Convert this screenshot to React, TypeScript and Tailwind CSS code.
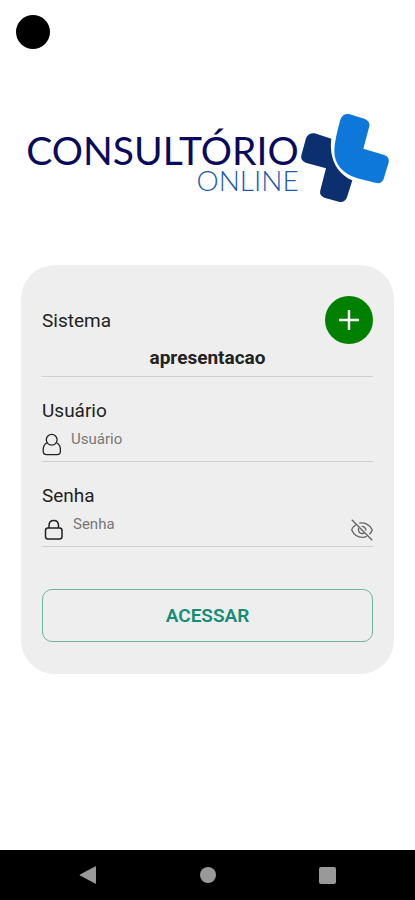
import { useState } from "react";

function LogoMark() {
  return (
    <svg viewBox="0 0 270 270" className="h-[90px] w-[90px] shrink-0" aria-hidden="true">
      <path
        fill="#0b2f6f"
        d="M47 61 L97 77 C90 130 110 180 160 202 L144 253 Q138 269 122 267 L76 254 Q60 248 64 232 L81 166 L20 149 Q4 143 7 127 L21 76 Q28 59 47 61 Z"
      />
      <path
        fill="#0e78da"
        d="M150 3 L196 17 Q214 24 211 40 L193 107 L256 126 Q272 132 269 148 L254 198 Q248 213 232 210 L175 196 Q105 172 106 112 Q107 80 124 20 Q130 1 150 3 Z"
      />
    </svg>
  );
}

function UserIcon() {
  return (
    <svg viewBox="0 0 20 24" className="mt-0.5 h-6 w-5 shrink-0" fill="none" stroke="#222" strokeWidth="1.3" aria-hidden="true">
      <circle cx="9.7" cy="6.8" r="5.4" />
      <path d="M5 9.8 C2.4 11.2 1.2 13.5 1.2 16.5 V18.2 Q1.2 21.6 4.6 21.6 H15 Q18.4 21.6 18.4 18.2 V16.5 C18.4 13.5 17.2 11.2 14.6 9.8" />
    </svg>
  );
}

function LockIcon() {
  return (
    <svg viewBox="0 0 20 24" className="mt-0.5 h-6 w-5 shrink-0" fill="none" stroke="#222" strokeWidth="1.5" aria-hidden="true">
      <rect x="1.5" y="10" width="16.5" height="11" rx="2.5" />
      <path d="M5 10 V7.5 Q5 2.5 9.8 2.5 Q14.5 2.5 14.5 7.5 V10" />
    </svg>
  );
}

function EyeOffIcon() {
  return (
    <svg viewBox="0 0 24 24" className="size-[22px]" fill="none" stroke="#666" strokeWidth="1.5" aria-hidden="true">
      <path d="M5.2 6.3 C3.2 7.7 1.2 10 0.8 12 C3 17 7.8 20 12.5 20 C14.3 20 15.8 19.6 17.2 18.8" />
      <path d="M9 4.5 C14.5 3.2 20.8 6.3 23.2 12 C22.7 13.6 21.4 15.4 20 16.6" />
      <path d="M8.4 9.8 C7.4 12.8 9.1 15.9 12 16 C13 16 13.7 15.7 14.4 15.2" />
      <path d="M11.6 8 C14.3 7.8 16.5 10 16.2 12.7" />
      <path d="M0.8 0.8 L23.2 23.2" />
    </svg>
  );
}

export default function App() {
  const [visible, setVisible] = useState(false);

  return (
    <div className="flex min-h-screen flex-col bg-white font-['Roboto',sans-serif] text-[#222]">
      <div className="px-4 pt-[15px]">
        <div className="size-[34px] rounded-full bg-black" />
      </div>

      <header className="flex justify-center pt-16">
        <h1 className="flex flex-col items-end pt-5 font-['Lato',sans-serif]">
          <span className="text-[39px] leading-[34px] text-[#0a0a5c]">CONSULTÓRIO</span>
          <span className="text-[28px] leading-[26px] font-light text-[#1c58ae]">ONLINE</span>
        </h1>
        <LogoMark />
      </header>

      <main className="px-[21px] pt-[62px]">
        <form
          className="flex flex-col rounded-[34px] bg-[#eee] px-[21px] pt-[31px] pb-8"
          onSubmit={(event) => event.preventDefault()}
        >
          <div className="flex items-center justify-between">
            <label htmlFor="sistema" className="pt-0.5 text-[19px] leading-6">Sistema</label>
            <button type="button" aria-label="Adicionar sistema" className="flex size-12 items-center justify-center rounded-full bg-[#008000]">
              <svg viewBox="0 0 20 20" className="size-5" stroke="white" strokeWidth="2.4" aria-hidden="true">
                <path d="M10 0 V20 M0 10 H20" />
              </svg>
            </button>
          </div>
          <input
            id="sistema"
            defaultValue="apresentacao"
            className="h-[33px] w-full border-b border-[#cfcfcf] bg-transparent pb-1.5 text-center text-[19px] font-bold outline-none"
          />

          <label htmlFor="usuario" className="pt-[22px] text-[19px] leading-6">Usuário</label>
          <div className="flex h-[39px] gap-[9px] border-b border-[#cfcfcf] pt-2">
            <UserIcon />
            <input
              id="usuario"
              placeholder="Usuário"
              className="h-4 min-w-0 flex-1 bg-transparent text-[15px] leading-4 outline-none placeholder:text-[#777]"
            />
          </div>

          <label htmlFor="senha" className="pt-[22px] text-[19px] leading-6">Senha</label>
          <div className="flex h-[39px] gap-[9px] border-b border-[#cfcfcf] pt-2 pl-[2px]">
            <LockIcon />
            <input
              id="senha"
              type={visible ? "text" : "password"}
              placeholder="Senha"
              className="h-4 min-w-0 flex-1 bg-transparent text-[15px] leading-4 outline-none placeholder:text-[#777]"
            />
            <button type="button" aria-label="Mostrar senha" onClick={() => setVisible(!visible)} className="mt-0.5 h-6">
              <EyeOffIcon />
            </button>
          </div>

          <button type="submit" className="mt-[42px] h-[53px] rounded-[10px] border border-[#6db59f] pt-0.5 text-[19px] font-semibold text-[#158c76]">
            ACESSAR
          </button>
        </form>
      </main>

      <nav className="mt-auto flex h-[50px] items-center justify-around bg-black px-7">
        <button type="button" aria-label="Voltar">
          <svg viewBox="0 0 18 18" className="size-[18px]" fill="#999" aria-hidden="true">
            <path d="M16 0.5 Q17 0 17 1 V17 Q17 18 16 17.5 L1 9.6 Q0 9 1 8.4 Z" />
          </svg>
        </button>
        <button type="button" aria-label="Início" className="size-4 rounded-full bg-[#999]" />
        <button type="button" aria-label="Recentes" className="size-[17px] rounded-xs bg-[#999]" />
      </nav>
    </div>
  );
}
